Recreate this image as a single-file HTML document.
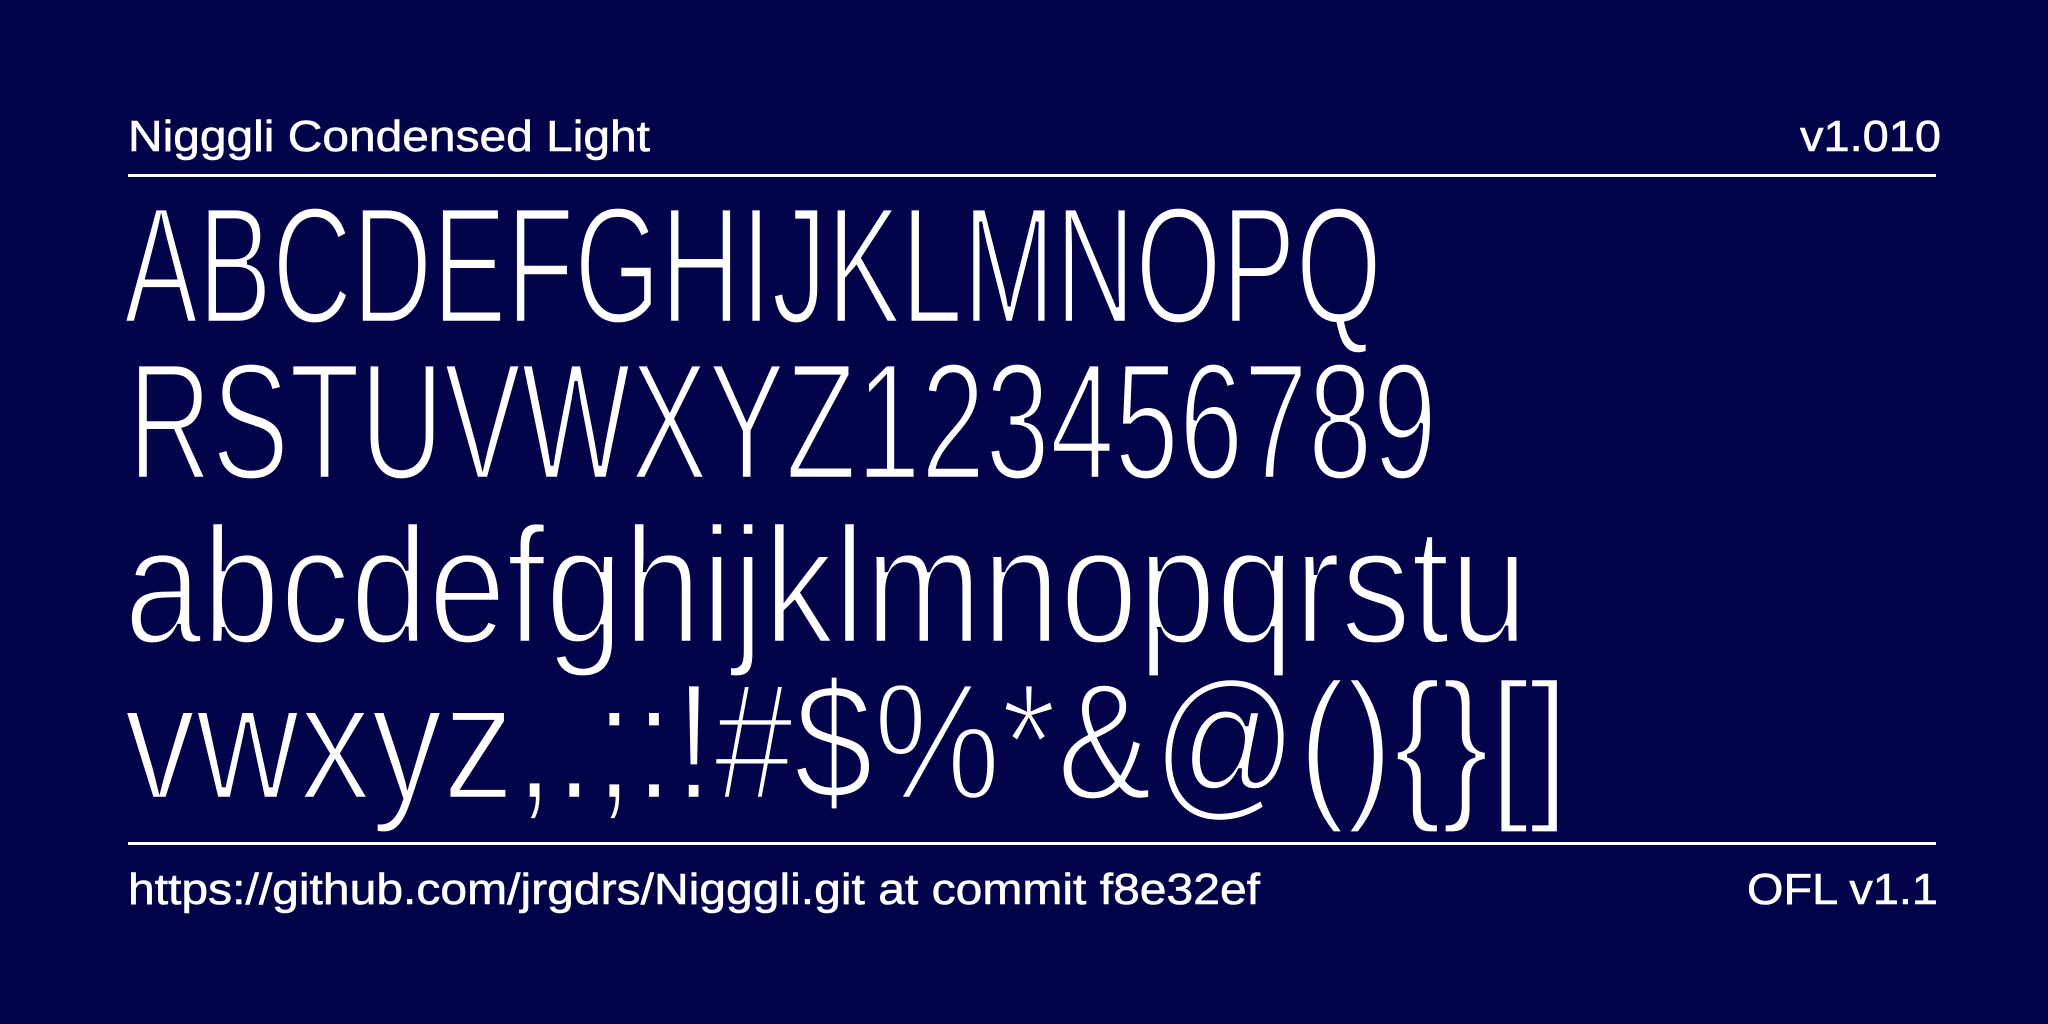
<!DOCTYPE html>
<html><head><meta charset="utf-8"><style>
html,body{margin:0;padding:0;background:#03034a;}
svg{display:block}
</style></head><body>
<svg width="2048" height="1024" viewBox="0 0 2048 1024" xmlns="http://www.w3.org/2000/svg">
<rect width="2048" height="1024" fill="#03034a"/>
<g fill="#ffffff" font-family="Liberation Sans, sans-serif">
<text x="128" y="151" font-size="44" textLength="522" lengthAdjust="spacingAndGlyphs" stroke="#ffffff" stroke-width="0.6">Nigggli Condensed Light</text>
<text x="1800" y="151" font-size="44" textLength="141" lengthAdjust="spacingAndGlyphs" stroke="#ffffff" stroke-width="0.6">v1.010</text>
<rect x="128" y="174" width="1808" height="3"/>
<g stroke="#03034a" stroke-width="4.5">
<text x="124" y="323" font-size="167" textLength="1258" lengthAdjust="spacingAndGlyphs">ABCDEFGHIJKLMNOPQ</text>
<text x="128" y="479" font-size="167" textLength="1309" lengthAdjust="spacingAndGlyphs">RSTUVWXYZ123456789</text>
<text x="124" y="643" font-size="167" textLength="1404" lengthAdjust="spacingAndGlyphs">abcdefghijklmnopqrstu</text>
<text x="124" y="799" font-size="167" textLength="1445" lengthAdjust="spacingAndGlyphs">vwxyz,.;:!#$%*&amp;@(){}[]</text>
</g>
<rect x="128" y="842" width="1808" height="3"/>
<text x="128" y="904" font-size="44" textLength="1132" lengthAdjust="spacingAndGlyphs" stroke="#ffffff" stroke-width="0.6">https://github.com/jrgdrs/Nigggli.git at commit f8e32ef</text>
<text x="1747" y="904" font-size="44" textLength="191" lengthAdjust="spacingAndGlyphs" stroke="#ffffff" stroke-width="0.6">OFL v1.1</text>
</g>
</svg>
</body></html>
